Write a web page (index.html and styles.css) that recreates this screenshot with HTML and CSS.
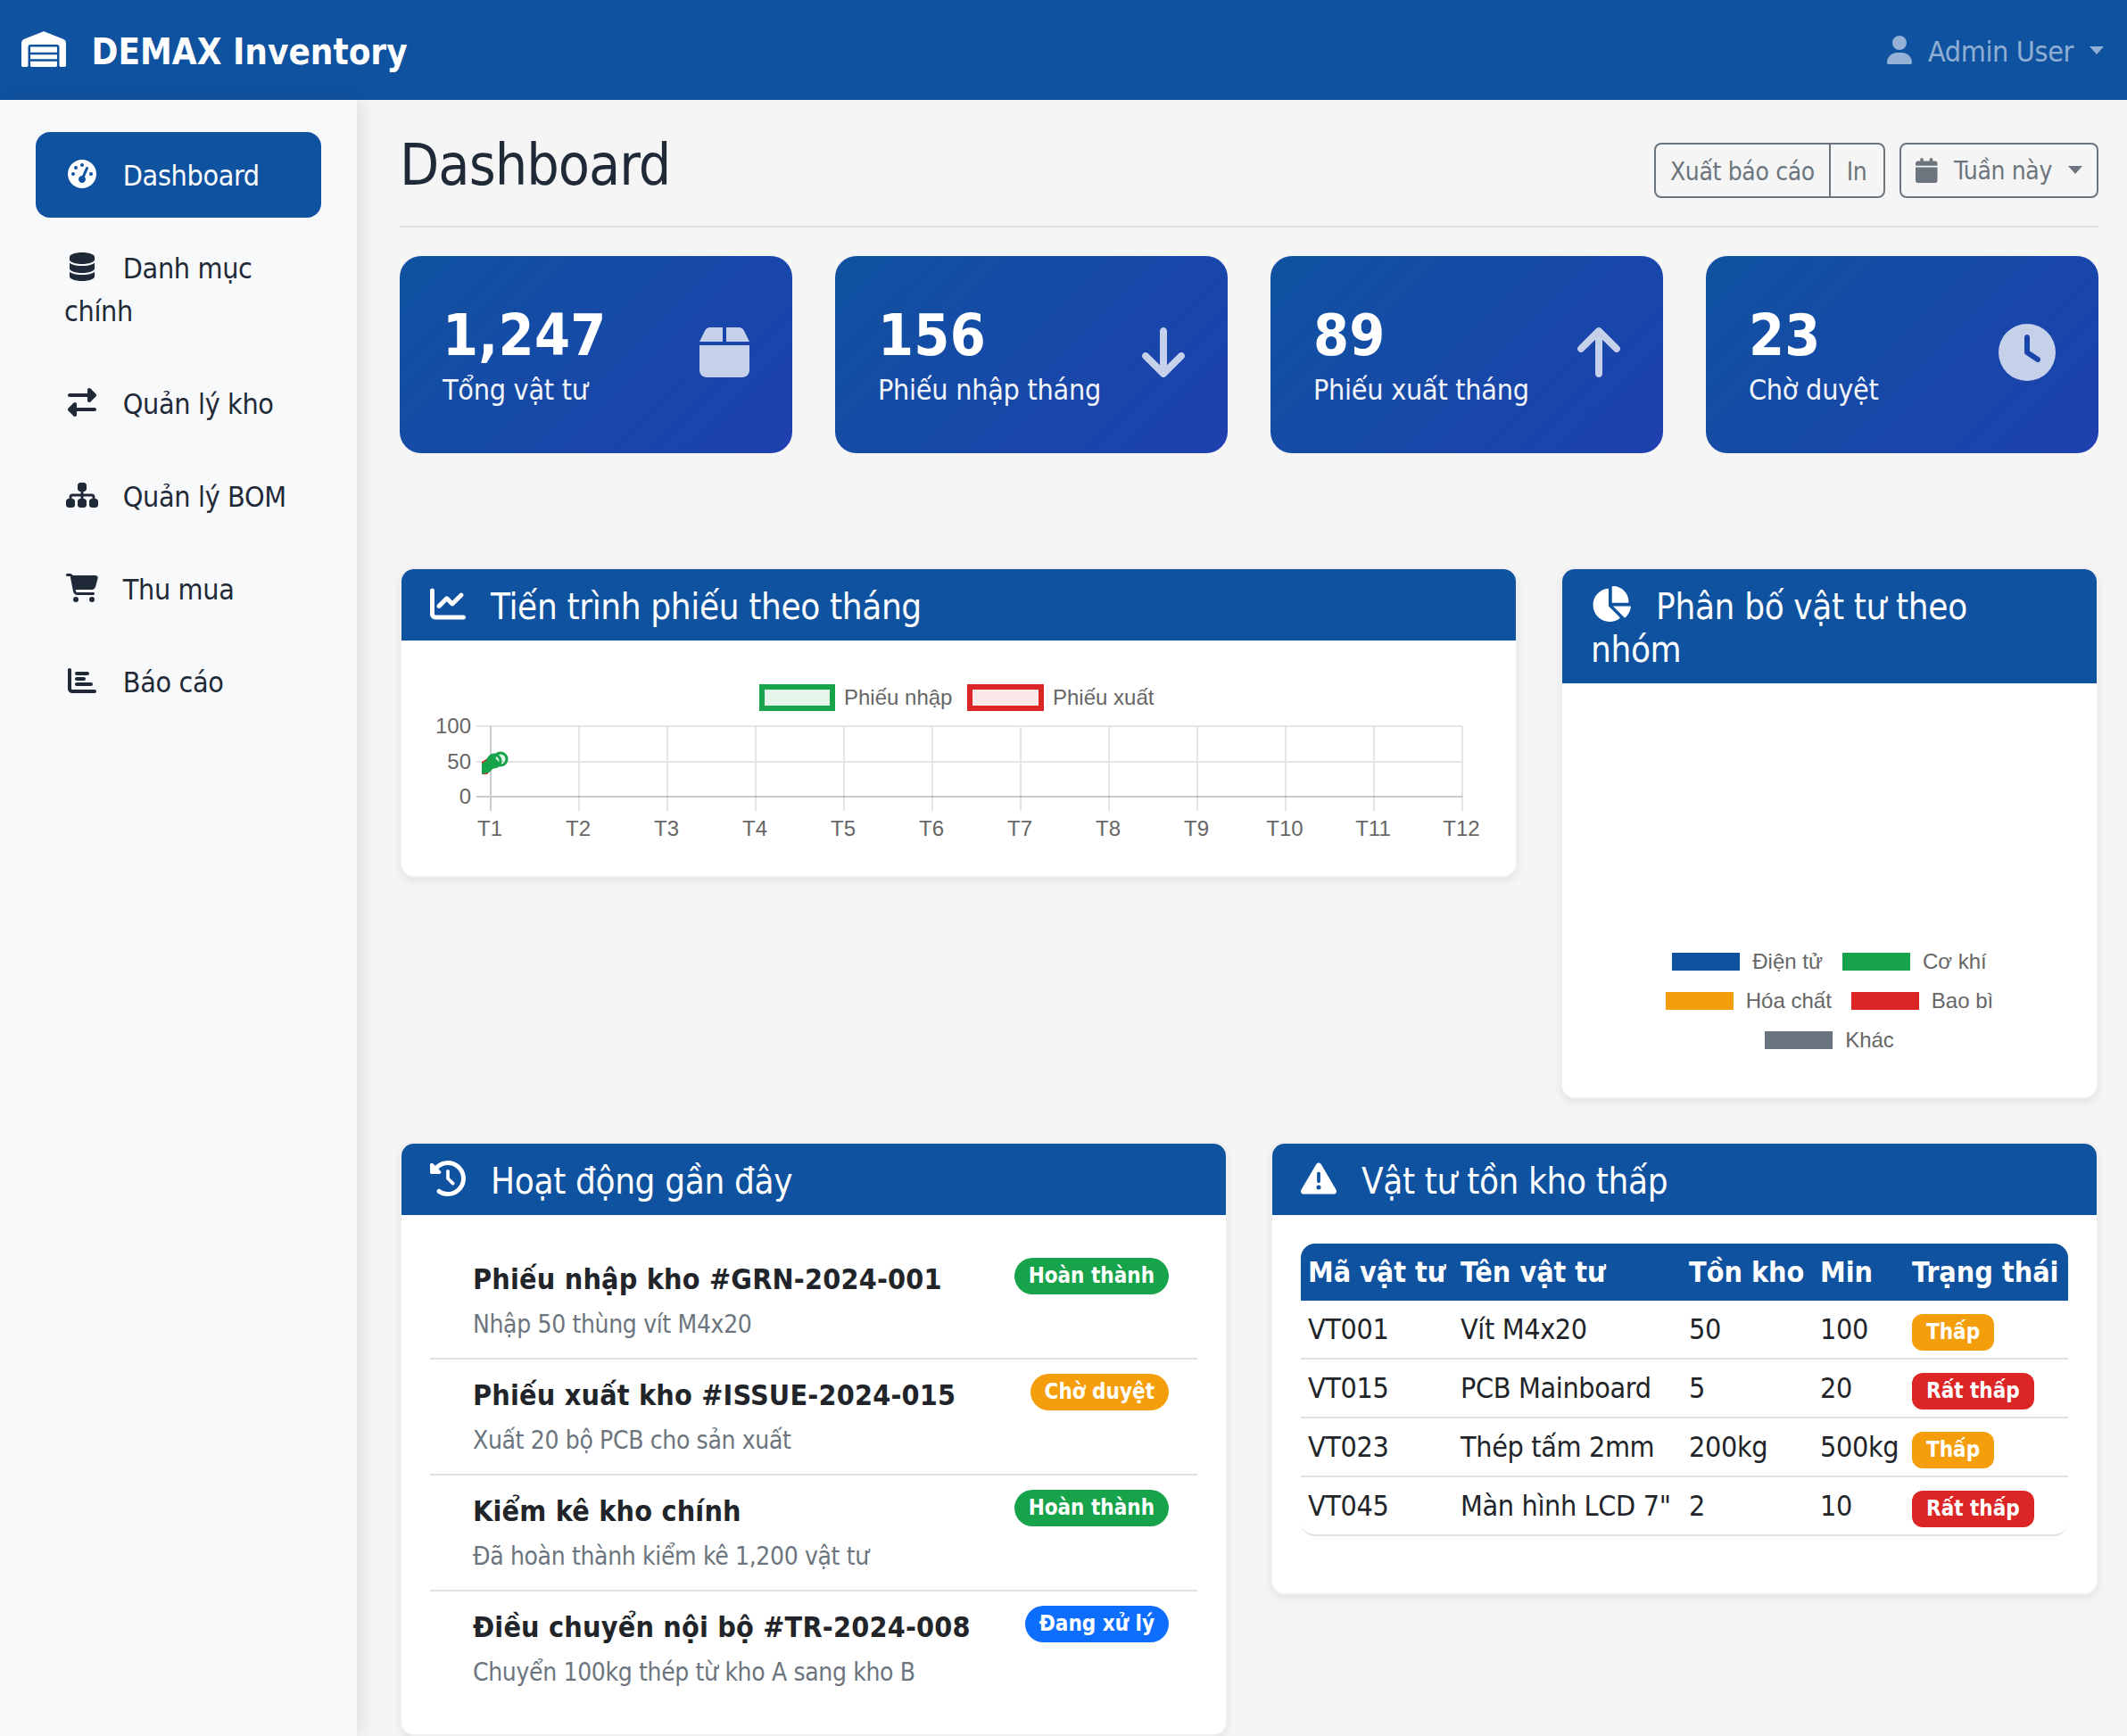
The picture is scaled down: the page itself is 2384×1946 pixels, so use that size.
FILE: index.html
```html
<!DOCTYPE html>
<html lang="vi">
<head>
    <meta charset="utf-8">
    <title>DEMAX Inventory</title>
    <link rel="stylesheet" href="styles.css">
</head>
<body>
    <!-- Thanh trên cùng -->
    <header class="topbar">
        <a class="brand" href="#">
            <svg class="brand-icon" viewBox="0 0 640 512"><path d="M0 488V171.3c0-26.2 15.9-49.7 40.2-59.4L308.1 4.8c7.6-3.1 16.1-3.1 23.8 0L599.8 111.9c24.3 9.7 40.2 33.3 40.2 59.4V488c0 13.3-10.7 24-24 24H568c-13.3 0-24-10.7-24-24V224c0-17.7-14.3-32-32-32H128c-17.7 0-32 14.3-32 32V488c0 13.3-10.7 24-24 24H24c-13.3 0-24-10.7-24-24zm488 24l-336 0c-13.3 0-24-10.7-24-24V432H512l0 56c0 13.3-10.7 24-24 24zM128 400V336H512v64H128zm0-96V224H512l0 80H128z"/></svg>
            DEMAX Inventory
        </a>
        <div class="user-menu">
            <svg class="user-icon" viewBox="0 0 448 512"><path d="M224 256A128 128 0 1 0 224 0a128 128 0 1 0 0 256zm-45.7 48C79.8 304 0 383.8 0 482.3C0 498.7 13.3 512 29.7 512H418.3c16.4 0 29.7-13.3 29.7-29.7C448 383.8 368.2 304 269.7 304H178.3z"/></svg>
            <span class="user-name">Admin User</span>
            <span class="caret"></span>
        </div>
    </header>

    <div class="layout">
        <!-- Menu bên trái -->
        <aside class="sidebar">
            <a class="nav-link active" href="#">
                <span class="nav-icon"><svg viewBox="0 0 512 512"><path d="M0 256a256 256 0 1 1 512 0A256 256 0 1 1 0 256zM288 96a32 32 0 1 0 -64 0 32 32 0 1 0 64 0zM256 416c35.3 0 64-28.7 64-64c0-17.4-6.9-33.1-18.1-44.6L366 161.7c5.3-12.1-.2-26.3-12.3-31.6s-26.3 .2-31.6 12.3L257.9 288c-.6 0-1.3 0-1.9 0c-35.3 0-64 28.7-64 64s28.7 64 64 64zM176 144a32 32 0 1 0 -64 0 32 32 0 1 0 64 0zM96 288a32 32 0 1 0 0-64 32 32 0 1 0 0 64zm352-32a32 32 0 1 0 -64 0 32 32 0 1 0 64 0z"/></svg></span>
                Dashboard
            </a>
            <a class="nav-link" href="#">
                <span class="nav-icon"><svg viewBox="0 0 448 512"><path d="M448 80v48c0 44.2-100.3 80-224 80S0 172.2 0 128V80C0 35.8 100.3 0 224 0S448 35.8 448 80zM393.2 214.7c20.8-7.4 39.9-16.9 54.8-28.6V288c0 44.2-100.3 80-224 80S0 332.2 0 288V186.1c14.9 11.8 34 21.2 54.8 28.6C99.7 230.7 159.5 240 224 240s124.3-9.3 169.2-25.3zM0 346.1c14.9 11.8 34 21.2 54.8 28.6C99.7 390.7 159.5 400 224 400s124.3-9.3 169.2-25.3c20.8-7.4 39.9-16.9 54.8-28.6V432c0 44.2-100.3 80-224 80S0 476.2 0 432V346.1z"/></svg></span>
                Danh mục chính
            </a>
            <a class="nav-link" href="#">
                <span class="nav-icon"><svg viewBox="0 0 512 512"><path d="M32 96l320 0V32c0-12.9 7.8-24.6 19.8-29.6s25.7-2.2 34.9 6.9l96 96c6 6 9.4 14.1 9.4 22.6s-3.4 16.6-9.4 22.6l-96 96c-9.2 9.2-22.9 11.9-34.9 6.9s-19.8-16.6-19.8-29.6V160L32 160c-17.7 0-32-14.3-32-32s14.3-32 32-32zM480 352c17.7 0 32 14.3 32 32s-14.3 32-32 32H160v64c0 12.9-7.8 24.6-19.8 29.6s-25.7 2.2-34.9-6.9l-96-96c-6-6-9.4-14.1-9.4-22.6s3.4-16.6 9.4-22.6l96-96c9.2-9.2 22.9-11.9 34.9-6.9s19.8 16.6 19.8 29.6l0 64H480z"/></svg></span>
                Quản lý kho
            </a>
            <a class="nav-link" href="#">
                <span class="nav-icon"><svg viewBox="0 0 576 512"><path d="M208 80c0-26.5 21.5-48 48-48h64c26.5 0 48 21.5 48 48v64c0 26.5-21.5 48-48 48h-8v40H464c30.9 0 56 25.1 56 56v32h8c26.5 0 48 21.5 48 48v64c0 26.5-21.5 48-48 48H464c-26.5 0-48-21.5-48-48V368c0-26.5 21.5-48 48-48h8V288c0-4.4-3.6-8-8-8H312v40h8c26.5 0 48 21.5 48 48v64c0 26.5-21.5 48-48 48H256c-26.5 0-48-21.5-48-48V368c0-26.5 21.5-48 48-48h8V280H112c-4.4 0-8 3.6-8 8v32h8c26.5 0 48 21.5 48 48v64c0 26.5-21.5 48-48 48H48c-26.5 0-48-21.5-48-48V368c0-26.5 21.5-48 48-48h8V288c0-30.9 25.1-56 56-56H264V192h-8c-26.5 0-48-21.5-48-48V80z"/></svg></span>
                Quản lý BOM
            </a>
            <a class="nav-link" href="#">
                <span class="nav-icon"><svg viewBox="0 0 576 512"><path d="M0 24C0 10.7 10.7 0 24 0H69.5c22 0 41.5 12.8 50.6 32h411c26.3 0 45.5 25 38.6 50.4l-41 152.3c-8.5 31.4-37 53.3-69.5 53.3H170.7l5.4 28.5c2.2 11.3 12.1 19.5 23.6 19.5H488c13.3 0 24 10.7 24 24s-10.7 24-24 24H199.7c-34.6 0-64.3-24.6-70.7-58.5L77.4 54.5c-.7-3.8-4-6.5-7.9-6.5H24C10.7 48 0 37.3 0 24zM128 464a48 48 0 1 1 96 0 48 48 0 1 1 -96 0zm336-48a48 48 0 1 1 0 96 48 48 0 1 1 0-96z"/></svg></span>
                Thu mua
            </a>
            <a class="nav-link" href="#">
                <span class="nav-icon"><svg viewBox="0 0 512 512"><path d="M32 32c17.7 0 32 14.3 32 32V400c0 8.8 7.2 16 16 16H480c17.7 0 32 14.3 32 32s-14.3 32-32 32H80c-44.2 0-80-35.8-80-80V64C0 46.3 14.3 32 32 32zm96 96c0-17.7 14.3-32 32-32l192 0c17.7 0 32 14.3 32 32s-14.3 32-32 32l-192 0c-17.7 0-32-14.3-32-32zm32 64H288c17.7 0 32 14.3 32 32s-14.3 32-32 32H160c-17.7 0-32-14.3-32-32s14.3-32 32-32zm0 96H416c17.7 0 32 14.3 32 32s-14.3 32-32 32H160c-17.7 0-32-14.3-32-32s14.3-32 32-32z"/></svg></span>
                Báo cáo
            </a>
        </aside>

        <main class="content">
            <div class="page-head">
                <h1>Dashboard</h1>
                <div class="toolbar">
                    <div class="btn-group">
                        <button class="btn">Xuất báo cáo</button>
                        <button class="btn btn-print">In</button>
                    </div>
                    <button class="btn btn-period">
                        <svg class="btn-icon" viewBox="0 0 448 512"><path d="M96 32V64H48C21.5 64 0 85.5 0 112v48H448V112c0-26.5-21.5-48-48-48H352V32c0-17.7-14.3-32-32-32s-32 14.3-32 32V64H160V32c0-17.7-14.3-32-32-32S96 14.3 96 32zM448 192H0V464c0 26.5 21.5 48 48 48H400c26.5 0 48-21.5 48-48V192z"/></svg>
                        <span>Tuần này</span>
                        <span class="caret"></span>
                    </button>
                </div>
            </div>

            <!-- Thẻ thống kê -->
            <section class="stats">
                <div class="stat-card">
                    <div>
                        <div class="stat-value">1,247</div>
                        <div class="stat-label">Tổng vật tư</div>
                    </div>
                    <svg class="stat-icon" viewBox="0 0 448 512"><path d="M50.7 58.5L0 160H208V32H93.7C75.5 32 58.9 42.3 50.7 58.5zM240 160H448L397.3 58.5C389.1 42.3 372.5 32 354.3 32H240V160zm208 32H0V416c0 35.3 28.7 64 64 64H384c35.3 0 64-28.7 64-64V192z"/></svg>
                </div>
                <div class="stat-card">
                    <div>
                        <div class="stat-value">156</div>
                        <div class="stat-label">Phiếu nhập tháng</div>
                    </div>
                    <svg class="stat-icon" viewBox="0 0 384 512"><path d="M169.4 470.6c12.5 12.5 32.8 12.5 45.3 0l160-160c12.5-12.5 12.5-32.8 0-45.3s-32.8-12.5-45.3 0L224 370.8 224 64c0-17.7-14.3-32-32-32s-32 14.3-32 32l0 306.7L54.6 265.4c-12.5-12.5-32.8-12.5-45.3 0s-12.5 32.8 0 45.3l160 160z"/></svg>
                </div>
                <div class="stat-card">
                    <div>
                        <div class="stat-value">89</div>
                        <div class="stat-label">Phiếu xuất tháng</div>
                    </div>
                    <svg class="stat-icon" viewBox="0 0 384 512"><path d="M214.6 41.4c-12.5-12.5-32.8-12.5-45.3 0l-160 160c-12.5 12.5-12.5 32.8 0 45.3s32.8 12.5 45.3 0L160 141.2V448c0 17.7 14.3 32 32 32s32-14.3 32-32V141.2L329.4 246.6c12.5 12.5 32.8 12.5 45.3 0s12.5-32.8 0-45.3l-160-160z"/></svg>
                </div>
                <div class="stat-card">
                    <div>
                        <div class="stat-value">23</div>
                        <div class="stat-label">Chờ duyệt</div>
                    </div>
                    <svg class="stat-icon" viewBox="0 0 512 512"><path d="M256 0a256 256 0 1 1 0 512A256 256 0 1 1 256 0zM232 120V256c0 8 4 15.5 10.7 20l96 64c11 7.4 25.9 4.4 33.3-6.7s4.4-25.9-6.7-33.3L280 243.2V120c0-13.3-10.7-24-24-24s-24 10.7-24 24z"/></svg>
                </div>
            </section>

            <!-- Biểu đồ -->
            <section class="charts">
                <div class="card">
                    <h5 class="card-header">
                        <svg class="head-icon" viewBox="0 0 512 512"><path d="M64 64c0-17.7-14.3-32-32-32S0 46.3 0 64V400c0 44.2 35.8 80 80 80H480c17.7 0 32-14.3 32-32s-14.3-32-32-32H80c-8.8 0-16-7.2-16-16V64zm406.6 86.6c12.5-12.5 12.5-32.8 0-45.3s-32.8-12.5-45.3 0L320 210.7l-57.4-57.4c-12.5-12.5-32.8-12.5-45.3 0l-112 112c-12.5 12.5-12.5 32.8 0 45.3s32.8 12.5 45.3 0L240 221.3l57.4 57.4c12.5 12.5 32.8 12.5 45.3 0l128-128z"/></svg>
                        Tiến trình phiếu theo tháng
                    </h5>
                    <div class="card-body">
                        <svg class="line-chart" viewBox="0 0 1185 200">
                            <rect class="legend-in" x="372" y="20" width="79" height="24"/>
                            <text class="chart-text" x="464" y="40">Phiếu nhập</text>
                            <rect class="legend-out" x="605" y="20" width="80" height="24"/>
                            <text class="chart-text" x="698" y="40">Phiếu xuất</text>

                            <path class="grid-line" d="M52 64H1157M52 104H1157M167 64V159M266 64V159M365 64V159M464 64V159M563 64V159M662 64V159M761 64V159M860 64V159M959 64V159M1058 64V159M1157 64V159"/>
                            <path class="axis-line" d="M52 143H1157M68 64V159"/>

                            <text class="chart-text tick-y" x="46" y="72">100</text>
                            <text class="chart-text tick-y" x="46" y="112">50</text>
                            <text class="chart-text tick-y" x="46" y="151">0</text>

                            <text class="chart-text tick-x" x="67" y="187">T1</text>
                            <text class="chart-text tick-x" x="166" y="187">T2</text>
                            <text class="chart-text tick-x" x="265" y="187">T3</text>
                            <text class="chart-text tick-x" x="364" y="187">T4</text>
                            <text class="chart-text tick-x" x="463" y="187">T5</text>
                            <text class="chart-text tick-x" x="562" y="187">T6</text>
                            <text class="chart-text tick-x" x="661" y="187">T7</text>
                            <text class="chart-text tick-x" x="760" y="187">T8</text>
                            <text class="chart-text tick-x" x="859" y="187">T9</text>
                            <text class="chart-text tick-x" x="958" y="187">T10</text>
                            <text class="chart-text tick-x" x="1057" y="187">T11</text>
                            <text class="chart-text tick-x" x="1156" y="187">T12</text>

                            <!-- Đường dữ liệu bị dồn về đầu trục -->
                            <path class="series-out" d="M58 104L68 98L76 104L64 118L58 118Z"/>
                            <path class="series-in" d="M58 106L70 97L78 105L66 116L58 118Z"/>
                            <circle class="point-in" cx="72" cy="103" r="7"/>
                            <circle class="point-in" cx="79" cy="101" r="7"/>
                        </svg>
                    </div>
                </div>
                <div class="card">
                    <h5 class="card-header header-wrap">
                        <svg class="head-icon" viewBox="0 0 576 512"><path d="M304 240V16.6c0-9 7-16.6 16-16.6C443.7 0 544 100.3 544 224c0 9-7.6 16-16.6 16H304zM32 272C32 150.7 122.1 50.3 239 34.3c9.2-1.3 17 6.1 17 15.4V288L412.5 444.5c6.7 6.7 6.2 17.7-1.5 23.1C371.8 495.6 323.8 512 272 512C139.5 512 32 404.6 32 272zm526.4 16c9.3 0 16.6 7.8 15.4 17c-7.7 55.9-34.6 105.6-73.9 142.3c-6 5.6-15.4 5.2-21.2-.7L320 288H558.4z"/></svg>
                        Phân bố vật tư theo nhóm
                    </h5>
                    <div class="card-body pie-body">
                        <div class="pie-row">
                            <span class="pie-item"><i class="swatch swatch-blue"></i>Điện tử</span>
                            <span class="pie-item"><i class="swatch swatch-green"></i>Cơ khí</span>
                        </div>
                        <div class="pie-row">
                            <span class="pie-item"><i class="swatch swatch-orange"></i>Hóa chất</span>
                            <span class="pie-item"><i class="swatch swatch-red"></i>Bao bì</span>
                        </div>
                        <div class="pie-row">
                            <span class="pie-item"><i class="swatch swatch-gray"></i>Khác</span>
                        </div>
                    </div>
                </div>
            </section>

            <section class="bottom-row">
                <!-- Hoạt động gần đây -->
                <div class="card">
                    <h5 class="card-header">
                        <svg class="head-icon" viewBox="0 0 512 512"><path d="M75 75L41 41C25.9 25.9 0 36.6 0 57.9V168c0 13.3 10.7 24 24 24H134.1c21.4 0 32.1-25.9 17-41l-30.8-30.8C155 85.5 203 64 256 64c106 0 192 86 192 192s-86 192-192 192c-40.8 0-78.6-12.7-109.7-34.4c-14.5-10.1-34.4-6.6-44.6 7.9s-6.6 34.4 7.9 44.6C151.2 495 201.7 512 256 512c141.4 0 256-114.6 256-256S397.4 0 256 0C185.3 0 121.3 28.7 75 75zm181 53c-13.3 0-24 10.7-24 24V256c0 6.4 2.5 12.5 7 17l72 72c9.4 9.4 24.6 9.4 33.9 0s9.4-24.6 0-33.9l-65-65V152c0-13.3-10.7-24-24-24z"/></svg>
                        Hoạt động gần đây
                    </h5>
                    <div class="card-body">
                        <div class="activity">
                            <div class="activity-text">
                                <div class="activity-title">Phiếu nhập kho #GRN-2024-001</div>
                                <div class="activity-sub">Nhập 50 thùng vít M4x20</div>
                            </div>
                            <span class="badge pill bg-green">Hoàn thành</span>
                        </div>
                        <div class="activity">
                            <div class="activity-text">
                                <div class="activity-title">Phiếu xuất kho #ISSUE-2024-015</div>
                                <div class="activity-sub">Xuất 20 bộ PCB cho sản xuất</div>
                            </div>
                            <span class="badge pill bg-orange">Chờ duyệt</span>
                        </div>
                        <div class="activity">
                            <div class="activity-text">
                                <div class="activity-title">Kiểm kê kho chính</div>
                                <div class="activity-sub">Đã hoàn thành kiểm kê 1,200 vật tư</div>
                            </div>
                            <span class="badge pill bg-green">Hoàn thành</span>
                        </div>
                        <div class="activity">
                            <div class="activity-text">
                                <div class="activity-title">Điều chuyển nội bộ #TR-2024-008</div>
                                <div class="activity-sub">Chuyển 100kg thép từ kho A sang kho B</div>
                            </div>
                            <span class="badge pill bg-blue">Đang xử lý</span>
                        </div>
                    </div>
                </div>

                <!-- Vật tư tồn kho thấp -->
                <div class="card card-top">
                    <h5 class="card-header">
                        <svg class="head-icon" viewBox="0 0 512 512"><path d="M256 32c14.2 0 27.3 7.5 34.5 19.8l216 368c7.3 12.4 7.3 27.7 .2 40.1S486.3 480 472 480H40c-14.3 0-27.6-7.7-34.7-20.1s-7-27.8 .2-40.1l216-368C228.7 39.5 241.8 32 256 32zm0 128c-13.3 0-24 10.7-24 24V296c0 13.3 10.7 24 24 24s24-10.7 24-24V184c0-13.3-10.7-24-24-24zm32 224a32 32 0 1 0 -64 0 32 32 0 1 0 64 0z"/></svg>
                        Vật tư tồn kho thấp
                    </h5>
                    <div class="card-body">
                        <table class="low-table">
                            <thead>
                                <tr>
                                    <th class="col-code">Mã vật tư</th>
                                    <th class="col-name">Tên vật tư</th>
                                    <th class="col-qty">Tồn kho</th>
                                    <th class="col-min">Min</th>
                                    <th class="col-state">Trạng thái</th>
                                </tr>
                            </thead>
                            <tbody>
                                <tr>
                                    <td>VT001</td>
                                    <td>Vít M4x20</td>
                                    <td>50</td>
                                    <td>100</td>
                                    <td><span class="badge bg-orange">Thấp</span></td>
                                </tr>
                                <tr>
                                    <td>VT015</td>
                                    <td>PCB Mainboard</td>
                                    <td>5</td>
                                    <td>20</td>
                                    <td><span class="badge bg-red">Rất thấp</span></td>
                                </tr>
                                <tr>
                                    <td>VT023</td>
                                    <td>Thép tấm 2mm</td>
                                    <td>200kg</td>
                                    <td>500kg</td>
                                    <td><span class="badge bg-orange">Thấp</span></td>
                                </tr>
                                <tr>
                                    <td>VT045</td>
                                    <td>Màn hình LCD 7"</td>
                                    <td>2</td>
                                    <td>10</td>
                                    <td><span class="badge bg-red">Rất thấp</span></td>
                                </tr>
                            </tbody>
                        </table>
                    </div>
                </div>
            </section>
        </main>
    </div>
</body>
</html>
```

FILE: styles.css
```css
* {
    box-sizing: border-box;
}

body {
    margin: 0;
    background-color: #f5f5f5;
    color: #212529;
    font-family: "DejaVu Sans Condensed", "DejaVu Sans", sans-serif;
    font-size: 32px;
    line-height: 48px;
    letter-spacing: -0.35px;
}

svg {
    fill: currentColor;
}

/* Thanh trên cùng */
.topbar {
    display: flex;
    justify-content: space-between;
    align-items: center;
    height: 112px;
    padding: 0 26px 0 24px;
    background-color: #0f52a0;
}

.brand {
    padding-top: 3px;
    color: #fff;
    font-size: 40px;
    font-weight: bold;
    letter-spacing: 0;
    text-decoration: none;
}

.brand-icon {
    height: 40px;
    margin-right: 16px;
    vertical-align: -3px;
}

.user-menu {
    display: flex;
    align-items: center;
    gap: 18px;
    color: rgba(255, 255, 255, 0.55);
}

.user-icon {
    height: 32px;
}

.user-name {
    padding-top: 3px;
}

.caret {
    width: 0;
    height: 0;
    border-top: 9px solid currentColor;
    border-left: 8px solid transparent;
    border-right: 8px solid transparent;
}

/* Menu bên trái */
.layout {
    display: flex;
    align-items: stretch;
}

.sidebar {
    flex: 0 0 400px;
    position: relative;
    padding: 36px 40px 0;
    background-color: #f8f9fa;
    box-shadow: 4px 0 20px rgba(0, 0, 0, 0.1);
}

.nav-link {
    display: block;
    margin-bottom: 8px;
    padding: 25px 32px 23px;
    border-radius: 16px;
    color: #1f2937;
    text-decoration: none;
}

.nav-link.active {
    background-color: #0f52a0;
    color: #fff;
}

.nav-icon {
    display: inline-block;
    width: 40px;
    margin-right: 17px;
    text-align: center;
}

.nav-icon svg {
    height: 32px;
    max-width: 36px;
    vertical-align: -3px;
}

/* Nội dung */
.content {
    flex: 1;
    min-width: 0;
    padding: 32px 32px 0 48px;
}

.page-head {
    display: flex;
    justify-content: space-between;
    align-items: center;
    margin-bottom: 32px;
    padding-bottom: 16px;
    border-bottom: 2px solid #dee2e6;
}

h1 {
    margin: 3px 0 13px;
    color: #1f2937;
    font-size: 64px;
    font-weight: normal;
    line-height: 77px;
    letter-spacing: -1px;
}

.toolbar {
    display: flex;
    gap: 16px;
}

.btn-group {
    display: flex;
}

.btn {
    height: 62px;
    padding: 10px 16px 6px;
    background: transparent;
    border: 2px solid #6c757d;
    border-radius: 8px;
    color: #6c757d;
    font-family: inherit;
    font-size: 28px;
    line-height: 42px;
    letter-spacing: -0.35px;
}

.btn-group .btn:first-child {
    border-top-right-radius: 0;
    border-bottom-right-radius: 0;
}

.btn-group .btn:last-child {
    margin-left: -2px;
    border-top-left-radius: 0;
    border-bottom-left-radius: 0;
}

.btn-print {
    padding-left: 18px;
    padding-right: 19px;
}

.btn-period {
    display: flex;
    align-items: center;
    gap: 18px;
    padding-top: 8px;
    padding-bottom: 8px;
}

.btn-period span:first-of-type {
    padding-top: 3px;
}

.btn-icon {
    height: 28px;
}

/* Thẻ thống kê */
.stats {
    display: grid;
    grid-template-columns: repeat(4, 1fr);
    gap: 48px;
    margin-bottom: 128px;
}

.stat-card {
    display: flex;
    justify-content: space-between;
    align-items: center;
    height: 221px;
    padding: 50px 48px 46px;
    border-radius: 24px;
    background: linear-gradient(135deg, #0f52a0, #1e40af);
    color: #fff;
}

.stat-value {
    font-size: 64px;
    font-weight: bold;
    line-height: 77px;
    letter-spacing: 0.3px;
}

.stat-label {
    margin-top: -2px;
    letter-spacing: -0.25px;
    opacity: 0.95;
}

.stat-icon {
    height: 64px;
    margin-bottom: 9px;
    opacity: 0.75;
}

/* Khung chung */
.charts {
    display: grid;
    grid-template-columns: 1253fr 603fr;
    gap: 48px;
    align-items: start;
    margin-bottom: 48px;
}

.bottom-row {
    display: grid;
    grid-template-columns: 1fr 1fr;
    gap: 48px;
}

.card {
    border: 2px solid #efefef;
    border-radius: 16px;
    background-color: #fff;
    box-shadow: 0 4px 8px rgba(0, 0, 0, 0.075);
    overflow: hidden;
}

.card-top {
    align-self: start;
}

.card-header {
    margin: 0;
    padding: 18px 32px 14px;
    background-color: #0f52a0;
    color: #fff;
    font-size: 40px;
    font-weight: normal;
    line-height: 48px;
}

/* Tiêu đề dài phải xuống dòng như bản gốc */
.header-wrap {
    padding-right: 100px;
}

.head-icon {
    height: 40px;
    margin-right: 17px;
    vertical-align: -3px;
}

.card-body {
    padding: 32px;
}

/* Biểu đồ */
.line-chart {
    display: block;
    width: 1185px;
    height: 200px;
}

.chart-text {
    fill: #666;
    font-family: "Liberation Sans", sans-serif;
    font-size: 24px;
    letter-spacing: 0;
}

.tick-y {
    text-anchor: end;
}

.tick-x {
    text-anchor: middle;
}

.grid-line {
    fill: none;
    stroke: rgba(0, 0, 0, 0.1);
    stroke-width: 2;
}

.axis-line {
    fill: none;
    stroke: rgba(0, 0, 0, 0.2);
    stroke-width: 2;
}

.legend-in {
    fill: rgba(22, 163, 74, 0.1);
    stroke: #16a34a;
    stroke-width: 6;
}

.legend-out {
    fill: rgba(220, 38, 38, 0.1);
    stroke: #dc2626;
    stroke-width: 6;
}

.series-out {
    fill: #dc2626;
    stroke: none;
}

.series-in {
    fill: #16a34a;
    stroke: none;
}

.point-in {
    fill: rgba(22, 163, 74, 0.1);
    stroke: #16a34a;
    stroke-width: 3;
}

.pie-body {
    display: flex;
    flex-direction: column;
    justify-content: flex-end;
    gap: 14px;
    height: 464px;
    padding-bottom: 49px;
    color: #666;
    font-family: "Liberation Sans", sans-serif;
    font-size: 24px;
    line-height: 30px;
    letter-spacing: 0;
}

.pie-row {
    display: flex;
    justify-content: center;
    gap: 22px;
}

.pie-item {
    display: flex;
    align-items: center;
    gap: 14px;
}

.swatch {
    width: 76px;
    height: 20px;
}

.swatch-blue { background-color: #0f52a0; }
.swatch-green { background-color: #16a34a; }
.swatch-orange { background-color: #f59e0b; }
.swatch-red { background-color: #dc2626; }
.swatch-gray { background-color: #6b7280; }

/* Hoạt động gần đây */
.activity {
    display: flex;
    justify-content: space-between;
    align-items: flex-start;
    padding: 16px 32px 16px 48px;
    border-bottom: 2px solid #dee2e6;
}

.activity:last-child {
    border-bottom: none;
}

.activity-title {
    font-weight: bold;
    letter-spacing: 0.2px;
}

.activity-sub {
    margin: 3px 0 -3px;
    color: #6c757d;
    font-size: 28px;
}

/* Nhãn trạng thái */
.badge {
    display: inline-block;
    padding: 8px 16px;
    border-radius: 12px;
    color: #fff;
    font-size: 24px;
    font-weight: bold;
    line-height: 25px;
    letter-spacing: 0;
    white-space: nowrap;
}

.pill {
    border-radius: 40px;
}

.bg-green { background-color: #16a34a; }
.bg-orange { background-color: #f59e0b; }
.bg-red { background-color: #dc2626; }
.bg-blue { background-color: #0d6efd; }

/* Bảng tồn kho thấp */
.low-table {
    width: 860px;
    margin-bottom: 32px;
    border-collapse: separate;
    border-spacing: 0;
    table-layout: fixed;
}

.low-table th {
    padding: 8px;
    background-color: #0f52a0;
    color: #fff;
    text-align: left;
    letter-spacing: 0;
    white-space: nowrap;
}

.low-table th:first-child {
    border-top-left-radius: 16px;
}

.low-table th:last-child {
    border-top-right-radius: 16px;
}

.low-table td {
    padding: 8px;
    border-bottom: 2px solid #dee2e6;
    white-space: nowrap;
}

.low-table tr:last-child td:first-child {
    border-bottom-left-radius: 16px;
}

.low-table tr:last-child td:last-child {
    border-bottom-right-radius: 16px;
}

.col-code { width: 171px; }
.col-name { width: 256px; }
.col-qty { width: 147px; }
.col-min { width: 103px; }
.col-state { width: 183px; }
```
